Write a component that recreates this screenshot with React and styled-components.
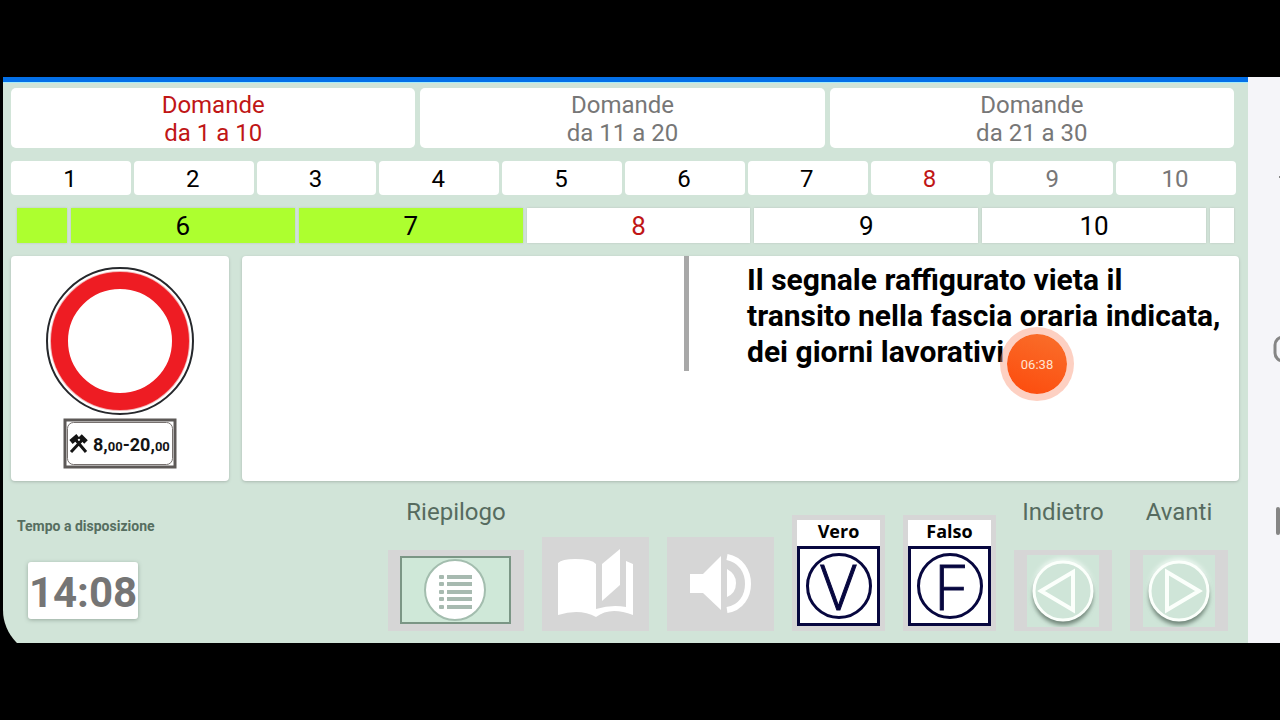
import styled, { createGlobalStyle } from "styled-components"

const schede = [
    { testo: "da 1 a 10", colore: "#c01616" },
    { testo: "da 11 a 20", colore: "#777777" },
    { testo: "da 21 a 30", colore: "#777777" },
]

const numeri = [1, 2, 3, 4, 5, 6, 7, 8, 9, 10]

function coloreNumero(n) {
    if (n === 8) return "#c01616"
    if (n > 8) return "#777777"
    return "#000000"
}

const striscia = [
    { n: "", fatta: true, largura: 50 },
    { n: 6, fatta: true },
    { n: 7, fatta: true },
    { n: 8, colore: "#c01616" },
    { n: 9 },
    { n: 10 },
    { n: "", largura: 24 },
]

export default function App() {
    return (
        <>
            <StileGlobale />
            <Schermo>
                <Dispositivo>
                    <Quiz>
                        <BarraBlu />
                        <Contenuto>
                            <Schede>
                                {schede.map((s) => (
                                    <Scheda key={s.testo} $colore={s.colore}>
                                        Domande<br />{s.testo}
                                    </Scheda>
                                ))}
                            </Schede>
                            <Numeri>
                                {numeri.map((n) => (
                                    <Numero key={n} $colore={coloreNumero(n)}>{n}</Numero>
                                ))}
                            </Numeri>
                            <Striscia>
                                {striscia.map((c, i) => (
                                    <Casella
                                        key={i}
                                        $fatta={c.fatta}
                                        $colore={c.colore}
                                        $largura={c.largura}
                                        aria-label={c.n === "" ? "altre domande" : undefined}
                                    >
                                        {c.n}
                                    </Casella>
                                ))}
                            </Striscia>
                            <Pannelli>
                                <Segnale>
                                    <Cartello />
                                </Segnale>
                                <Domanda>
                                    <Spazio />
                                    <Divisore />
                                    <Testo>
                                        Il segnale raffigurato vieta il<br />
                                        transito nella fascia oraria indicata,<br />
                                        dei giorni lavorativi
                                    </Testo>
                                    <Registratore>06:38</Registratore>
                                </Domanda>
                            </Pannelli>
                        </Contenuto>
                        <Piede>
                            <Tempo>
                                <h2>Tempo a disposizione</h2>
                                <Orologio>14:08</Orologio>
                            </Tempo>
                            <Comandi>
                                <Colonna>
                                    <label htmlFor="riepilogo">Riepilogo</label>
                                    <Tasto id="riepilogo" $w={136} $h={81}><IconaLista /></Tasto>
                                </Colonna>
                                <Tasto $w={107} $h={94} aria-label="Manuale"><IconaLibro /></Tasto>
                                <Tasto $w={107} $h={94} aria-label="Audio"><IconaAudio /></Tasto>
                                <Risposta>
                                    <span>Vero</span>
                                    <Riquadro><Cerchio>V</Cerchio></Riquadro>
                                </Risposta>
                                <Risposta>
                                    <span>Falso</span>
                                    <Riquadro><Cerchio>F</Cerchio></Riquadro>
                                </Risposta>
                                <Colonna>
                                    <label htmlFor="indietro">Indietro</label>
                                    <Tasto id="indietro" $w={98} $h={81}>
                                        <IconaFreccia punti="14,36 46,17 46,55" />
                                    </Tasto>
                                </Colonna>
                                <Colonna>
                                    <label htmlFor="avanti">Avanti</label>
                                    <Tasto id="avanti" $w={98} $h={81}>
                                        <IconaFreccia punti="56,36 24,17 24,55" />
                                    </Tasto>
                                </Colonna>
                            </Comandi>
                        </Piede>
                    </Quiz>
                    <Navigazione>
                        <svg width="32" height="566" viewBox="0 0 32 566" fill="none" stroke="#858585" strokeWidth="3">
                            <path d="M33 98 L31 100 L33 102" strokeWidth="1" />
                            <rect x="27" y="260" width="22" height="24" rx="8" />
                            <path d="M30 432 V456" strokeWidth="4" strokeLinecap="round" />
                        </svg>
                    </Navigazione>
                </Dispositivo>
            </Schermo>
        </>
    )
}

function Cartello() {
    return (
        <svg width="152" height="204" viewBox="0 0 152 204" role="img" aria-label="Divieto di transito 8.00-20.00">
            <circle cx="76" cy="75" r="73" fill="#ffffff" stroke="#26282c" strokeWidth="2" />
            <circle cx="76" cy="75" r="70" fill="#f3b5b6" />
            <circle cx="76" cy="75" r="60.5" fill="#ffffff" stroke="#ee1c23" strokeWidth="17" />
            <rect x="21" y="154" width="110" height="47" fill="#ffffff" stroke="#5d5957" strokeWidth="3" />
            <rect x="23.5" y="156.5" width="105" height="42" rx="6" fill="#ffffff" stroke="#77716f" strokeWidth="1" />
            <g stroke="#141414" fill="none">
                <path d="M27 186 L40 172 M42 186 L31 173" strokeWidth="3" />
                <path d="M27 176 L34 170 M36 170 L42 176" strokeWidth="5" />
            </g>
            <text x="49" y="185" fontFamily="Roboto, 'Liberation Sans', sans-serif" fontWeight="700" fontSize="18" fill="#141414">
                8,<tspan fontSize="13">00</tspan>-20,<tspan fontSize="13">00</tspan>
            </text>
        </svg>
    )
}

function IconaLista() {
    const righe = [19, 26, 34, 41, 49]
    return (
        <svg width="112" height="69" viewBox="0 0 112 69" aria-hidden="true">
            <rect x="1" y="1" width="109" height="66" fill="#cfe8d8" stroke="#7b9685" strokeWidth="2" />
            <circle cx="55" cy="34" r="30" fill="#ffffff" stroke="#a3bdae" strokeWidth="2" />
            {righe.map((y) => (
                <g key={y} fill="#a7bab0">
                    <rect x="39" y={y} width="5" height="4" rx="1" />
                    <rect x="47" y={y} width="25" height="4" />
                </g>
            ))}
        </svg>
    )
}

function IconaLibro() {
    return (
        <svg width="76" height="72" viewBox="0 0 76 72" fill="#ffffff" aria-hidden="true">
            <path d="M0 15 Q4 11 17 11 Q34 11 38 16 V61 Q54 56 68 59 V13 L75 16 V67 Q52 58 38 69 Q22 60 0 67 Z" />
            <path d="M38 11 H45 V58 L38 60 Z M60 10 H68 V58 H60 Z M44 45 H68 V58 H44 Z" fill="#d6d6d6" />
            <path d="M44 16 L62 1 V37 L44 53 Z" />
        </svg>
    )
}

function IconaAudio() {
    return (
        <svg width="62" height="60" viewBox="0 0 62 60" aria-hidden="true">
            <path d="M0 20 H13 L31 2 V56 L13 39 H0 Z" fill="#ffffff" />
            <path d="M37 15 Q46 20 46 29 Q46 39 37 43 Z" fill="#ffffff" />
            <path d="M37 3 C65 8 65 52 37 56" fill="none" stroke="#ffffff" strokeWidth="6" />
        </svg>
    )
}

function IconaFreccia({ punti }) {
    return (
        <svg width="72" height="72" viewBox="0 0 72 72" aria-hidden="true">
            <defs>
                <filter id="sfuma" x="-20%" y="-20%" width="140%" height="140%">
                    <feGaussianBlur stdDeviation="2" />
                </filter>
            </defs>
            <rect width="72" height="72" fill="#cfe5d8" />
            <circle cx="36" cy="33" r="30" fill="#edf8f1" filter="url(#sfuma)" />
            <circle cx="36" cy="40" r="30" fill="#6f8478" filter="url(#sfuma)" />
            <circle cx="36" cy="36" r="29" fill="#cfe5d8" stroke="#fbfffb" strokeWidth="3" />
            <polygon points={punti} fill="none" stroke="#fbfffb" strokeWidth="4" />
        </svg>
    )
}

const StileGlobale = createGlobalStyle`
* {
    box-sizing: border-box;
}
body {
    margin: 0;
    background-color: #000000;
    font-family: Roboto, "Liberation Sans", sans-serif;
}
button {
    font-family: inherit;
    border: none;
    padding: 0;
    cursor: pointer;
}
svg {
    display: block;
}
`

const Schermo = styled.div`
min-height: 100vh;
display: flex;
align-items: center;
`

const Dispositivo = styled.div`
width: 100%;
display: flex;
padding-left: 3px;
overflow: hidden;
background-color: #000000;
`

/* the rounded corner runs on below the visible edge */
const Quiz = styled.main`
flex: 1;
min-width: 0;
margin-bottom: -13px;
padding-bottom: 13px;
background-color: #d1e4d8;
border-bottom-left-radius: 46px;
`

const BarraBlu = styled.div`
height: 6px;
background-color: #0470e8;
border-bottom: 1px solid #a5ecfa;
`

const Contenuto = styled.div`
display: flex;
flex-direction: column;
gap: 13px;
padding: 5px 9px 0 8px;
`

const Schede = styled.nav`
display: grid;
grid-template-columns: repeat(3, 1fr);
gap: 5px;
margin-right: 5px;
`

const Scheda = styled.button`
height: 60px;
padding-top: 2px;
border-radius: 5px;
background-color: #ffffff;
color: ${(props) => props.$colore};
font-size: 24px;
line-height: 28px;
`

const Numeri = styled.div`
display: grid;
grid-template-columns: repeat(10, 1fr);
gap: 3px;
margin-right: 3px;
`

const Numero = styled.button`
height: 34px;
padding: 2px 2px 0 0;
border-radius: 4px;
background-color: #ffffff;
color: ${(props) => props.$colore};
font-size: 24px;
line-height: 28px;
`

const Striscia = styled.div`
display: flex;
gap: 4px;
margin: 0 5px 0 6px;
`

const Casella = styled.button`
flex: ${(props) => (props.$largura ? `0 0 ${props.$largura}px` : "1 1 0")};
height: 35px;
background-color: ${(props) => (props.$fatta ? "#adff2f" : "#ffffff")};
color: ${(props) => props.$colore || "#000000"};
box-shadow: 0 0 2px #b9c4bd;
font-size: 26px;
line-height: 28px;
`

const Pannelli = styled.section`
display: flex;
gap: 13px;
`

const Segnale = styled.div`
flex: 0 0 218px;
display: flex;
justify-content: center;
padding-top: 10px;
border-radius: 4px;
background-color: #ffffff;
box-shadow: 0 1px 3px #a9b8af;
`

const Domanda = styled.div`
position: relative;
flex: 1;
display: flex;
min-height: 225px;
border-radius: 4px;
background-color: #ffffff;
box-shadow: 0 1px 3px #a9b8af;
`

const Spazio = styled.div`
flex: 1;
`

const Divisore = styled.div`
width: 5px;
height: 115px;
background-color: #a8a8a8;
`

const Testo = styled.p`
flex: 0 0 550px;
margin: 0;
padding: 6px 0 0 58px;
color: #000000;
font-size: 30px;
font-weight: 700;
line-height: 36px;
`

/* floating bubble of the screen recorder */
const Registratore = styled.div`
position: absolute;
top: 71px;
right: 165px;
width: 74px;
height: 74px;
display: flex;
align-items: center;
justify-content: center;
border: 7px solid rgba(250, 150, 120, 0.45);
border-radius: 50%;
background: linear-gradient(200deg, #f9702c, #fd4a0c) padding-box;
color: #ffe3d2;
font-size: 13px;
`

const Piede = styled.footer`
display: flex;
justify-content: space-between;
padding: 17px 20px 12px 14px;
`

const Tempo = styled.div`
padding-top: 18px;
h2{
    margin: 0;
    color: #566e60;
    font-size: 14px;
    font-weight: 700;
    line-height: 20px;
}
`

const Orologio = styled.time`
display: flex;
align-items: center;
justify-content: center;
width: 110px;
height: 57px;
margin: 26px 0 0 11px;
padding-top: 4px;
border-radius: 3px;
background-color: #ffffff;
box-shadow: 0 1px 4px #98aa9f;
color: #757575;
font-size: 42px;
font-weight: 700;
`

const Comandi = styled.div`
display: flex;
align-items: flex-end;
gap: 18px;
`

const Colonna = styled.div`
display: flex;
flex-direction: column;
align-items: center;
gap: 24px;
label{
    color: #566b5f;
    font-size: 24px;
    line-height: 28px;
}
`

const Tasto = styled.button`
display: flex;
align-items: center;
justify-content: center;
width: ${(props) => props.$w}px;
height: ${(props) => props.$h}px;
background-color: #d6d6d6;
`

const Risposta = styled.button`
display: flex;
flex-direction: column;
width: 93px;
padding: 5px;
background-color: #d6d6d6;
span{
    height: 26px;
    background-color: #ffffff;
    color: #000000;
    font-family: "Open Sans", "Noto Sans", sans-serif;
    font-size: 18px;
    font-weight: 700;
    line-height: 22px;
}
`

const Riquadro = styled.div`
display: flex;
align-items: center;
justify-content: center;
height: 80px;
border: 3px solid #07073f;
background-color: #ffffff;
`

const Cerchio = styled.div`
display: flex;
align-items: center;
justify-content: center;
width: 66px;
height: 66px;
border: 3px solid #07073f;
border-radius: 50%;
color: #07073f;
font-family: "Open Sans", "Noto Sans", sans-serif;
font-size: 62px;
font-weight: 300;
line-height: 60px;
-webkit-text-stroke: 1px #07073f;
`

const Navigazione = styled.aside`
flex: 0 0 32px;
overflow: hidden;
background-color: #f5f5f9;
`
